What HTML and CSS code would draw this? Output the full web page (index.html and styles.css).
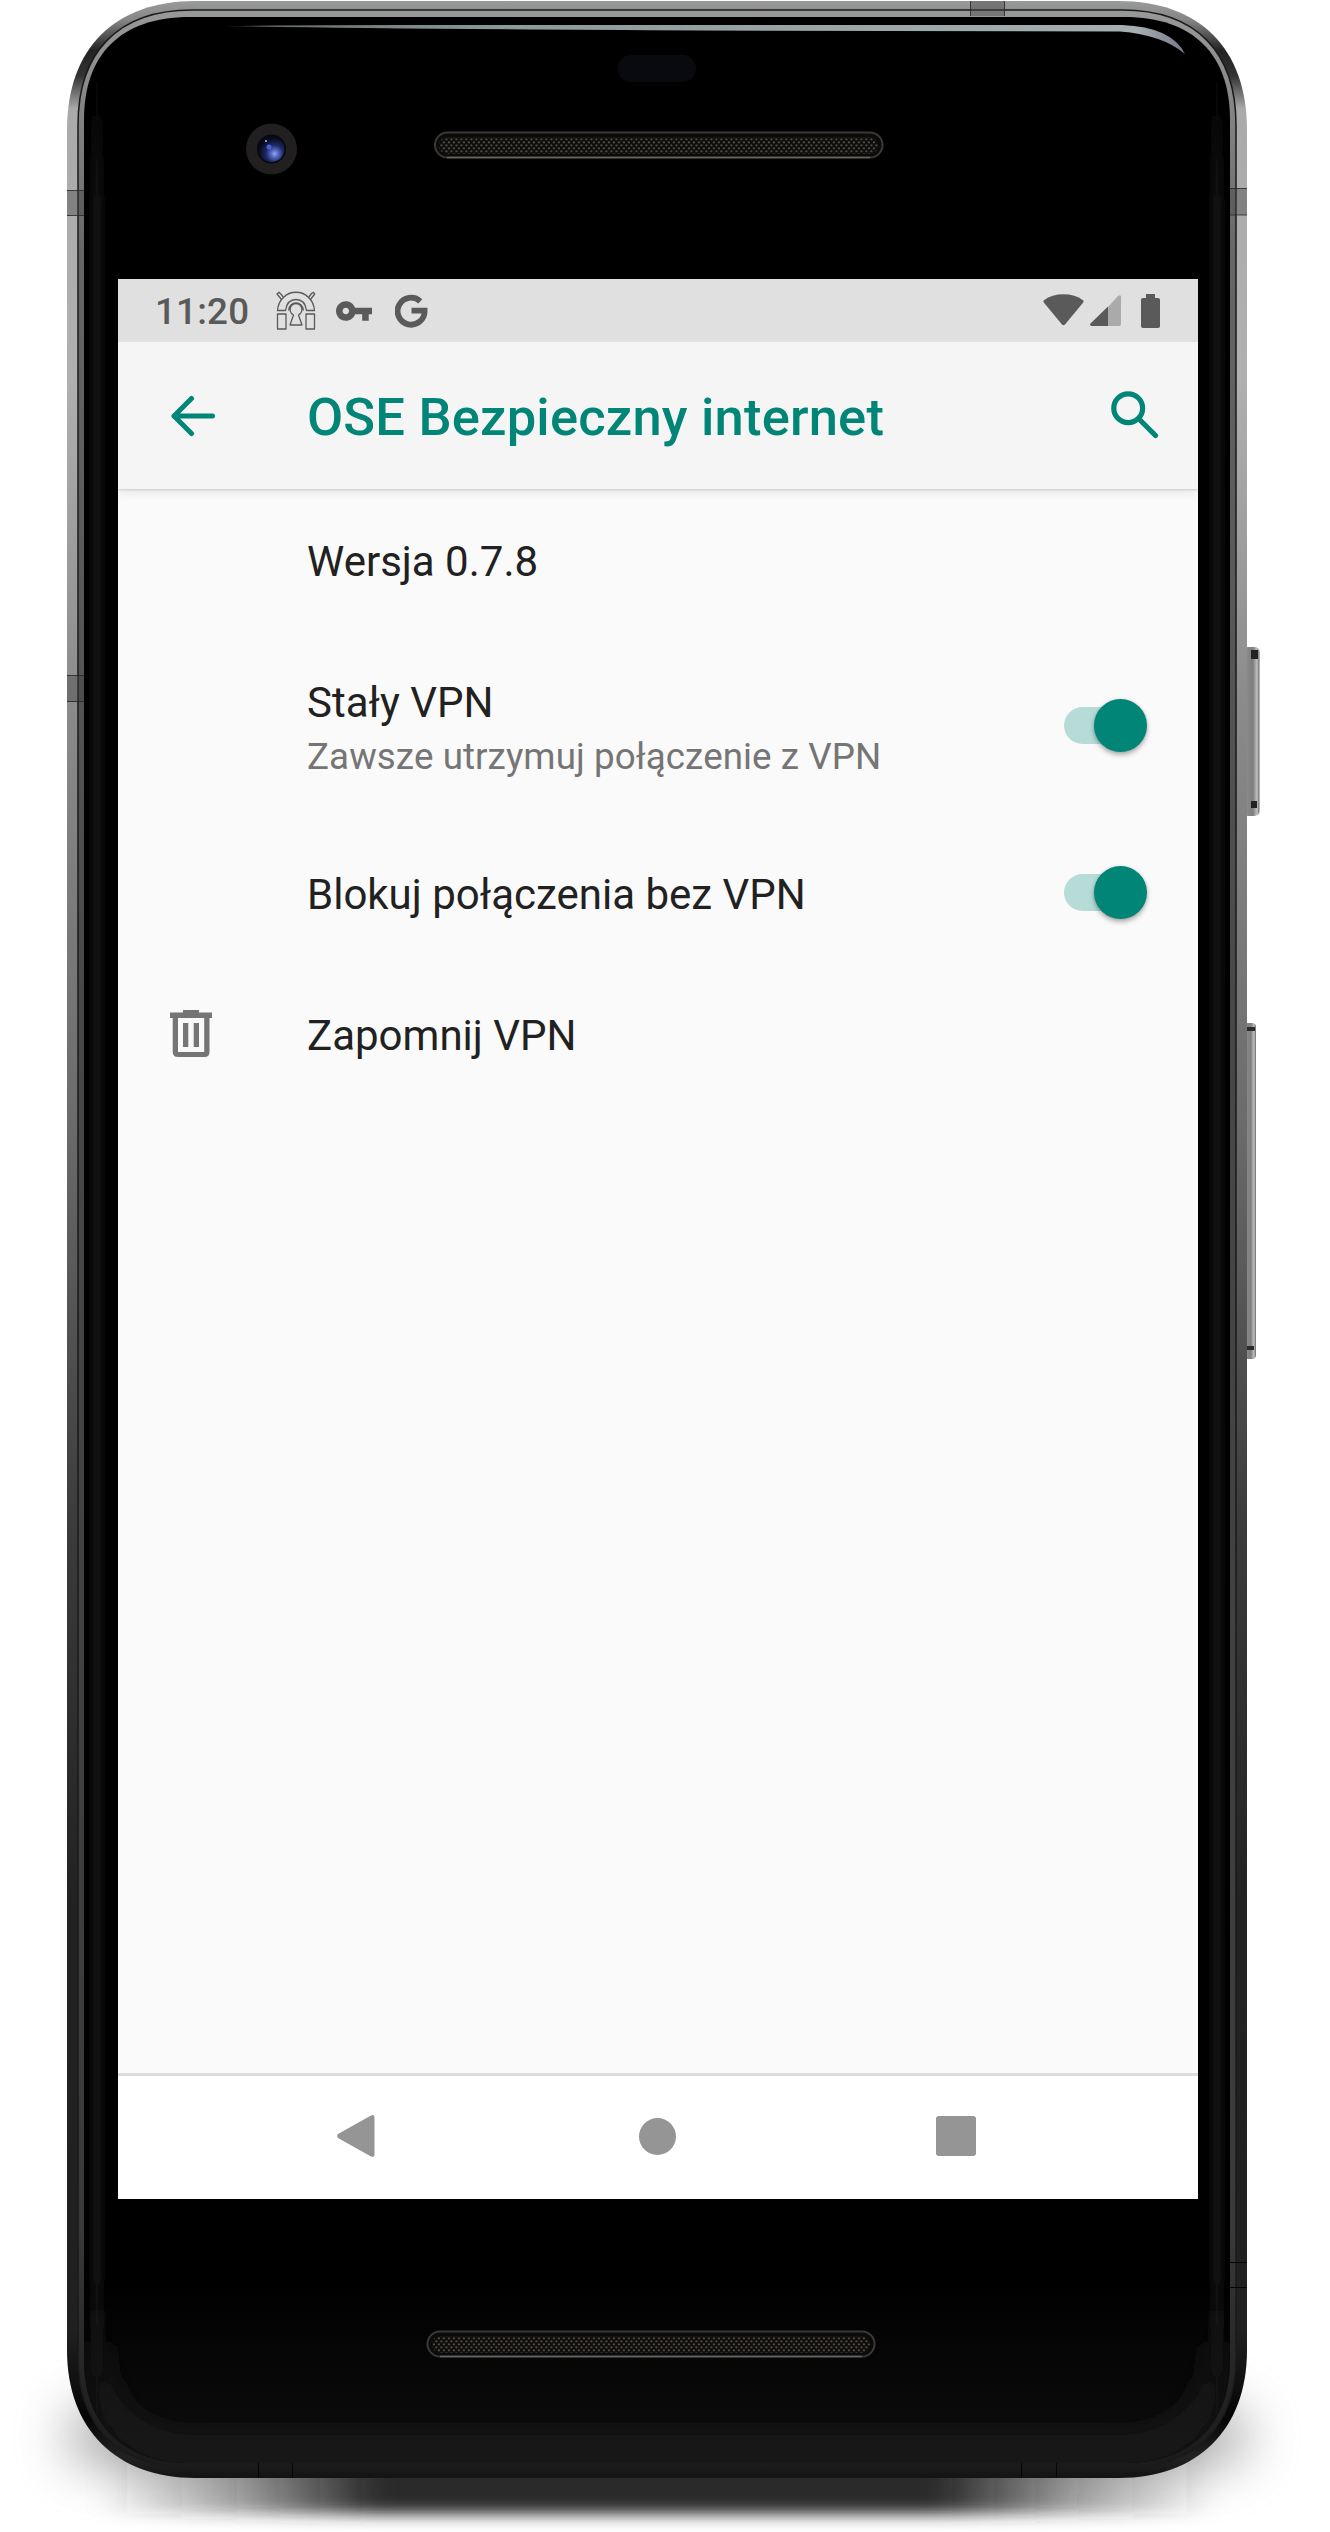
FILE: index.html
```html
<!DOCTYPE html>
<html lang="pl">
<head>
<meta charset="utf-8">
<title>OSE Bezpieczny internet</title>
<link rel="stylesheet" href="styles.css">
</head>
<body>
<div class="device">
  <svg class="hardware" viewBox="0 0 1330 2532" aria-hidden="true">
    <defs>
      <linearGradient id="metal" gradientUnits="userSpaceOnUse" x1="0" y1="0" x2="0" y2="2532">
        <stop offset="0" stop-color="#9a9c9b"/><stop offset=".008" stop-color="#858585"/>
        <stop offset=".02" stop-color="#222"/><stop offset=".03" stop-color="#333"/>
        <stop offset=".043" stop-color="#aaa"/><stop offset=".15" stop-color="#b0b0b0"/>
        <stop offset=".28" stop-color="#8a8a8a"/><stop offset=".44" stop-color="#6c6c6c"/>
        <stop offset=".6" stop-color="#3c3c3c"/><stop offset=".75" stop-color="#222"/>
        <stop offset=".92" stop-color="#202020"/><stop offset=".955" stop-color="#050505"/>
        <stop offset=".97" stop-color="#222"/><stop offset=".98" stop-color="#111"/>
      </linearGradient>
      <linearGradient id="chamfer" gradientUnits="userSpaceOnUse" x1="0" y1="8" x2="0" y2="2470">
        <stop offset="0" stop-color="#999"/><stop offset=".1" stop-color="#666"/>
        <stop offset=".4" stop-color="#484848"/><stop offset=".9" stop-color="#3a3a3a"/>
        <stop offset=".97" stop-color="#222"/><stop offset="1" stop-color="#1a1a1a"/>
      </linearGradient>
      <linearGradient id="glassBottom" x1="0" y1="0" x2="0" y2="1">
        <stop offset=".925" stop-color="#0c0c0c" stop-opacity="0"/><stop offset=".99" stop-color="#0c0c0c"/>
      </linearGradient>
      <linearGradient id="edgeFade" gradientUnits="userSpaceOnUse" x1="0" y1="60" x2="0" y2="2440">
        <stop offset="0" stop-color="#202020" stop-opacity="0"/><stop offset=".06" stop-color="#202020"/>
        <stop offset=".93" stop-color="#202020"/><stop offset="1" stop-color="#202020" stop-opacity="0"/>
      </linearGradient>
      <linearGradient id="cornerFade" gradientUnits="userSpaceOnUse" x1="0" y1="2290" x2="0" y2="2440">
        <stop offset="0" stop-color="#222" stop-opacity="0"/><stop offset="1" stop-color="#222"/>
      </linearGradient>
      <linearGradient id="groundX" x1="0" y1="0" x2="1" y2="0">
        <stop offset="0" stop-color="#2a2a2a" stop-opacity="0"/><stop offset=".13" stop-color="#2a2a2a" stop-opacity=".45"/>
        <stop offset=".25" stop-color="#2a2a2a"/><stop offset=".75" stop-color="#2a2a2a"/>
        <stop offset=".87" stop-color="#2a2a2a" stop-opacity=".45"/><stop offset="1" stop-color="#2a2a2a" stop-opacity="0"/>
      </linearGradient>
      <linearGradient id="shine" x1="0" y1="0" x2="1" y2="0">
        <stop offset="0" stop-color="#b0bcbc" stop-opacity=".5"/><stop offset=".3" stop-color="#8d9a9a"/>
        <stop offset=".95" stop-color="#a5afb1"/><stop offset="1" stop-color="#778"/>
      </linearGradient>
      <linearGradient id="key" x1="0" y1="0" x2="1" y2="0">
        <stop offset="0" stop-color="#555"/><stop offset=".25" stop-color="#8a8a8a"/>
        <stop offset=".6" stop-color="#7d7d7d"/><stop offset=".85" stop-color="#c0c0c0"/><stop offset="1" stop-color="#666"/>
      </linearGradient>
      <radialGradient id="lens" cx=".62" cy=".68" r=".6">
        <stop offset="0" stop-color="#92a4ed"/><stop offset=".25" stop-color="#5266bd"/>
        <stop offset=".55" stop-color="#1e2a68"/><stop offset="1" stop-color="#070a1e"/>
      </radialGradient>
      <pattern id="mesh" width="5" height="6" patternUnits="userSpaceOnUse">
        <rect width="5" height="6" fill="#0f0e0d"/>
        <rect x=".4" y=".5" width="2" height="1.7" fill="#555048"/><rect x="2.9" y="3.5" width="2" height="1.7" fill="#555048"/>
      </pattern>
      <filter id="ground" x="-20%" y="-60%" width="140%" height="220%"><feGaussianBlur stdDeviation="12 8"/></filter>
      <filter id="halo" x="-20%" y="-100%" width="140%" height="300%"><feGaussianBlur stdDeviation="26 24"/></filter>
      <filter id="soft" filterUnits="userSpaceOnUse" x="60" y="0" width="1200" height="2532"><feGaussianBlur stdDeviation="4"/></filter>
      <filter id="glow" filterUnits="userSpaceOnUse" x="0" y="2200" width="1330" height="332"><feGaussianBlur stdDeviation="14"/></filter>
      <clipPath id="glassClip"><path d="M84 120C84 55 120 17 190 17H1124C1194 17 1230 55 1230 120V2360C1230 2425 1190 2463 1124 2463H190C124 2463 84 2425 84 2360Z"/></clipPath>
    </defs>

    <!-- shadow on the ground -->
    <rect x="66" y="2400" width="1182" height="72" rx="35" fill="#888" opacity=".6" filter="url(#halo)"/>
    <rect x="100" y="2430" width="1114" height="84" fill="url(#groundX)" filter="url(#ground)"/>

    <!-- side keys -->
    <rect x="1243" y="647" width="16.5" height="169" rx="5" fill="url(#key)"/>
    <path d="M1251 650h7v9h-7zM1251 801h6v7h-6z" fill="#222"/>
    <rect x="1243" y="1023" width="13" height="336" rx="4" fill="url(#key)"/>
    <path d="M1247 1027h8v4h-8zM1247 1346h7v4h-7z" fill="#2b2b2b"/>

    <!-- metal frame -->
    <path d="M67 130C67 48 115 1 195 1H1119C1199 1 1247 48 1247 130V2350C1247 2430 1197 2478 1119 2478H195C117 2478 67 2430 67 2350Z" fill="url(#metal)"/>
    <path d="M78 125C78 52 118 10 192 10H1122C1196 10 1236 52 1236 125V2357C1236 2428 1194 2468 1122 2468H192C120 2468 78 2428 78 2357Z" fill="url(#chamfer)" stroke="#1a1a1a" stroke-width="1.5"/>
    <g fill="#444" fill-opacity=".4">
      <path d="M67 190h17v26H67zM67 675h18v27H67zM1230 188h17v27h-17zM970 1h35v15h-35z"/>
      <path d="M67 190.500h17M67 215.500h17M67 675.500h18M67 701.500h18M1230 188.500h17M1230 215h17M970.500 1v15M1004.500 1v15" stroke="#222" stroke-opacity=".75"/>
      <path d="M1230 2262.500h17M1230 2287.500h17M258.500 2463v15M292.500 2463v15M1021.500 2463v15M1056.500 2463v15" stroke="#060606"/>
    </g>

    <!-- front glass -->
    <path d="M84 120C84 55 120 17 190 17H1124C1194 17 1230 55 1230 120V2360C1230 2425 1190 2463 1124 2463H190C124 2463 84 2425 84 2360Z"/>
    <g clip-path="url(#glassClip)">
      <rect x="84" y="17" width="1146" height="2446" fill="url(#glassBottom)"/>
      <path d="M94 60H100V2440H94ZM1214 60H1220V2440H1214Z" fill="url(#edgeFade)" filter="url(#soft)"/>
      <path d="M98 2270V2350Q102 2450 195 2450H1119Q1212 2450 1216 2350V2270" fill="none" stroke="url(#cornerFade)" stroke-width="22" filter="url(#glow)"/>
    </g>
    <path d="M225 26Q300 25 400 25H1122Q1172 27 1185 54Q1163 35 1120 31.500L700 30.500Q380 29 225 26Z" fill="url(#shine)"/>

    <!-- sensor, camera and speakers -->
    <rect x="617.5" y="55" width="78.500" height="27" rx="13.500" fill="#090a0f"/>
    <circle cx="271.500" cy="149" r="25.500" fill="#211f1f"/>
    <circle cx="271.500" cy="149" r="14.500" fill="#080809"/>
    <circle cx="271.500" cy="149" r="13" fill="url(#lens)"/>
    <circle cx="269" cy="147" r="2.500" fill="#4564d2"/><circle cx="266" cy="141" r="1" fill="#bac6fa"/>
    <g stroke="#3a3937" stroke-width="2">
      <rect x="435" y="132.500" width="447.500" height="25" rx="12.500" fill="#0b0b0b"/>
      <rect x="427.500" y="2331.500" width="447" height="25" rx="12.500" fill="#0b0b0b"/>
    </g>
    <path d="M447 157.500H870M440 2356.500H862" stroke="#66645f" stroke-width="1.500"/>
    <rect x="439" y="137" width="439" height="17" rx="8.500" fill="url(#mesh)"/>
    <rect x="432" y="2336" width="438" height="17" rx="8.500" fill="url(#mesh)"/>
  </svg>

  <main class="screen">
    <header class="status">
      <span class="clock">11:20</span>
      <svg class="vpn-app" viewBox="0 0 40 40"><g fill="none" stroke="currentColor" stroke-width="1.300" stroke-linejoin="round">
        <path d="M1.500 19.500C2 13.500 4 9.500 7.500 6.500C14-.5 26-.5 32.500 6.500C36 9.500 38 13.500 38.500 19.500H30.500C29.500 12.500 25.500 8.500 20 8.500S10.500 12.500 9.500 19.500Z"/>
        <path d="M5.500 8.500L1 3L3 1.300L5 3.200L7.500 6.500M34.500 8.500L38.700 3L37.500 1.300L35.500 2.500L32.500 6.500"/>
        <path d="M1.500 23H10V38H1.500ZM30 23H38.500V38H30Z"/>
        <path d="M17.500 24A6 6 0 1 1 22.500 24L26 34H14ZM12.500 19.500C13 15 16 12 20 12S27 15 27.500 19.500"/>
      </g></svg>
      <svg class="vpn-key" viewBox="1 6 22 12"><path fill="currentColor" d="M12.650 10C11.830 7.670 9.610 6 7 6c-3.310 0-6 2.690-6 6s2.690 6 6 6c2.610 0 4.830-1.670 5.650-4H17v4h4v-4h2v-4H12.650zM7 14c-1.100 0-2-.9-2-2s.9-2 2-2 2 .9 2 2-.9 2-2 2z"/></svg>
      <svg class="google" viewBox="0 0 33 34"><path fill="none" stroke="currentColor" stroke-width="5.800" d="M25.300 7.300A13.500 13.500 0 1 0 29.600 16.700H16.500"/></svg>
      <span class="spacer"></span>
      <svg class="wifi" viewBox="0 0 41 32"><path fill="currentColor" d="M1 6.200Q9 .3 20.500 .3T40 6.200Q41 7.200 40.200 8.500L22 30.500Q20.500 32 19 30.500L.8 8.500Q0 7.200 1 6.200Z"/></svg>
      <svg class="signal" viewBox="0 0 31 31"><path fill="currentColor" fill-opacity=".4" d="M18 12L28 1Q31-.7 31 2V29Q31 31 29 31H18Z"/><path fill="currentColor" d="M18 11.500V31H1.500Q-.8 30.500 .5 28.500Z"/></svg>
      <svg class="battery" viewBox="0 0 19 34"><path fill="currentColor" d="M5 0H14V4H17Q19 4 19 6V32Q19 34 17 34H2Q0 34 0 32V6Q0 4 2 4H5Z"/></svg>
    </header>

    <div class="toolbar">
      <svg class="back" viewBox="0 0 46 42"><path fill="none" stroke="currentColor" stroke-width="5" stroke-linecap="round" stroke-linejoin="round" d="M21.500 3.500L4 21L21.500 38.500M4 21H42.500"/></svg>
      <h1 class="title">OSE Bezpieczny internet</h1>
      <svg class="search" viewBox="0 0 48 48"><g fill="none" stroke="currentColor" stroke-width="5.200"><circle cx="17.200" cy="17.200" r="14.400"/><path stroke-linecap="round" d="M28 28L31.500 31.500L44.500 44.500"/></g></svg>
    </div>

    <section class="settings">
      <div class="row"><div class="label"><p class="name">Wersja 0.7.8</p></div></div>
      <div class="row"><div class="label"><p class="name">Stały VPN</p><p class="summary">Zawsze utrzymuj połączenie z VPN</p></div><span class="switch"><span class="track"></span><span class="thumb"></span></span></div>
      <div class="row"><div class="label"><p class="name">Blokuj połączenia bez VPN</p></div><span class="switch"><span class="track"></span><span class="thumb"></span></span></div>
      <div class="row"><div class="lead"><svg class="trash" viewBox="0 0 42 47"><path fill="currentColor" fill-rule="evenodd" d="M13 0H29V2.600H42V7.900H39.500V42Q39.500 47 34.500 47H8Q2.700 47 2.700 42V7.900H0V2.600H13ZM8 7.900V42H34.200V7.900ZM13 13H18.300V37H13ZM23.700 13H29V37H23.700Z"/></svg></div><div class="label"><p class="name">Zapomnij VPN</p></div></div>
    </section>

    <nav class="navbar">
      <svg class="nav-back" viewBox="0 0 38 42"><path fill="currentColor" d="M34 .5Q37.500-1 37.500 2.500V39.500Q37.500 43 34 41.500L1 23Q-.8 21 1 19Z"/></svg>
      <span class="nav-home"></span>
      <span class="nav-recent"></span>
    </nav>
  </main>
</div>
</body>
</html>
```
FILE: styles.css
```css
* { box-sizing: border-box; }

body {
  margin: 0;
  background: #fff;
  font-family: Roboto, "Liberation Sans", sans-serif;
}

p, h1 { margin: 0; }
svg { display: block; flex: none; }

.device {
  display: grid;
  width: 1330px;
  height: 2532px;
  overflow: hidden;
}

.hardware, .screen { grid-area: 1 / 1; }
.hardware { width: 1330px; height: 2532px; }

.screen {
  z-index: 1;
  display: flex;
  flex-direction: column;
  width: 1080px;
  height: 1920px;
  margin: 279px 0 0 118px;
  background: #fafafa;
}

.status {
  display: flex;
  align-items: center;
  height: 63px;
  padding: 0 38px 0 37px;
  background: #e0e0e0;
  color: #5a5a5a;
}

.clock {
  width: 121px;
  padding-top: 2px;
  font-size: 36.75px;
  font-weight: 500;
  letter-spacing: .2px;
  line-height: 63px;
}

.vpn-app { width: 40px; height: 40px; margin-right: 20px; }
.vpn-key { width: 36px; height: 20px; margin-right: 23px; }
.google { width: 33px; height: 34px; }
.spacer { flex: 1; }
.wifi { width: 41px; height: 32px; margin: -2px 6px 0 0; }
.signal { width: 31px; height: 31px; margin-right: 20px; }
.battery { width: 19px; height: 34px; }

.toolbar {
  z-index: 1;
  display: flex;
  align-items: center;
  height: 147px;
  padding: 0 39px 0 52px;
  background: #f5f5f5;
  box-shadow: 0 1px 2px rgba(0, 0, 0, .15), 0 4px 10px rgba(0, 0, 0, .07);
  clip-path: inset(0 0 -20px);
  color: #008577;
}

.back { width: 46px; height: 42px; margin-right: 91px; }

.title {
  flex: 1;
  padding-top: 3px;
  font-size: 52.5px;
  font-weight: 500;
  letter-spacing: .19px;
  line-height: 64px;
}

.search { width: 48px; height: 48px; margin-top: -2px; }

.settings { flex: 1; }

.row {
  display: grid;
  grid-template-columns: 189px 1fr auto;
  align-items: center;
  padding-right: 51px;
}

.lead { padding-left: 52px; }

.label {
  grid-column: 2;
  padding: 44px 0 40px;
}

.name {
  color: #212121;
  font-size: 42px;
  line-height: 57px;
}

.summary {
  padding: 1px 0;
  color: #757575;
  font-size: 36.75px;
  letter-spacing: .07px;
  line-height: 49px;
}

.trash { width: 42px; height: 47px; color: #757575; }

.switch {
  display: grid;
  align-items: center;
  width: 83px;
  height: 53px;
  margin-bottom: 1px;
}

.track, .thumb { grid-area: 1 / 1; }

.track {
  width: 74px;
  height: 37px;
  border-radius: 18.5px;
  background: #b7dcd8;
}

.thumb {
  justify-self: end;
  width: 53px;
  height: 53px;
  border-radius: 50%;
  background: #008577;
  box-shadow: 0 3px 5px rgba(0, 0, 0, .3), 0 0 3px rgba(0, 0, 0, .12);
}

.navbar {
  display: flex;
  align-items: center;
  justify-content: space-between;
  height: 126px;
  padding: 0 222px 3px 219px;
  border-top: 3px solid #dcdcdc;
  background: #fff;
  color: #959595;
}

.nav-back { width: 38px; height: 42px; }
.nav-home { width: 37px; height: 37px; margin-left: 4px; border-radius: 50%; background: currentColor; }
.nav-recent { width: 40px; height: 40px; border-radius: 3px; background: currentColor; }
```
